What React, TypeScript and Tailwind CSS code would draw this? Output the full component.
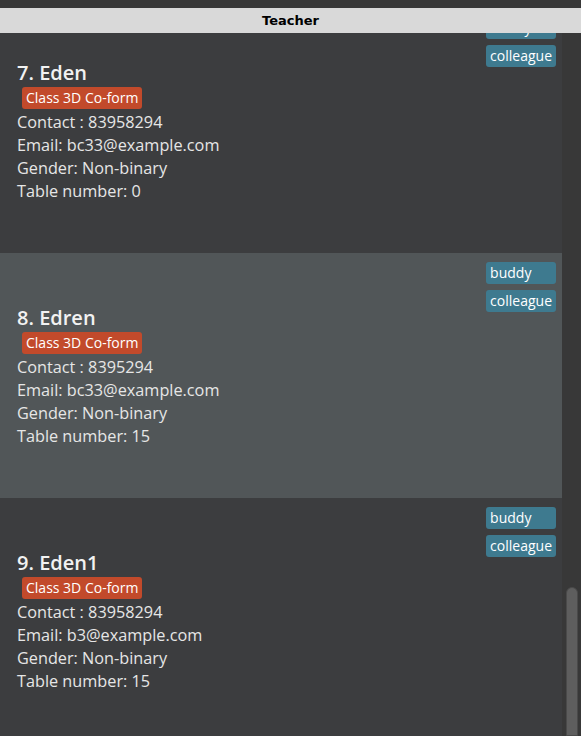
const people = [
  { id: 7, name: "Eden", contact: "83958294", email: "bc33@example.com", gender: "Non-binary", table: "0", light: false },
  { id: 8, name: "Edren", contact: "8395294", email: "bc33@example.com", gender: "Non-binary", table: "15", light: true },
  { id: 9, name: "Eden1", contact: "83958294", email: "b3@example.com", gender: "Non-binary", table: "15", light: false },
];

type Person = (typeof people)[number];

const PersonCard = ({ person }: { person: Person }) => (
  <div
    className={
      "flex h-[245px] shrink-0 pl-[17px] pr-[6px] " + (person.light ? "bg-[#515658]" : "bg-[#3c3d3f]")
    }
  >
    <div className="flex flex-1 flex-col justify-center pt-[1px] text-[16.25px] leading-[23px] text-[#e6e6e6]">
      <div className="text-[20px] font-semibold leading-[27px] text-[#f2f2f2]">
        {person.id}. {person.name}
      </div>
      <div className="mb-[2px] ml-[5px] mt-[1px] w-fit rounded-[3px] bg-[#c24a2b] px-[4px] text-[14px] leading-[22px] text-white">
        Class 3D Co-form
      </div>
      <div>Contact : {person.contact}</div>
      <div>Email: {person.email}</div>
      <div>Gender: {person.gender}</div>
      <div>Table number: {person.table}</div>
    </div>
    <div className="flex flex-col gap-[6px] pt-[9px]">
      <span className="rounded-[3px] bg-[#3e7a8f] px-[4px] text-[14px] leading-[22px] text-white">buddy</span>
      <span className="rounded-[3px] bg-[#3e7a8f] px-[4px] text-[14px] leading-[22px] text-white">colleague</span>
    </div>
  </div>
);

export default function App() {
  return (
    <div
      className="flex h-[736px] w-[581px] flex-col overflow-hidden bg-[#383838] pt-[8px]"
      style={{ fontFamily: '"Open Sans", "Noto Sans", sans-serif' }}
    >
      <div className="relative z-10 flex h-[25px] shrink-0 items-center justify-center bg-[#d9d9d9]">
        <span className="font-['DejaVu_Sans',sans-serif] text-[13px] font-bold text-black">Teacher</span>
      </div>
      <div className="flex min-h-0 flex-1">
        <div className="min-w-0 flex-1 overflow-hidden">
          <div className="mt-[-25px] flex flex-col">
            {people.map((p) => (
              <PersonCard key={p.id} person={p} />
            ))}
          </div>
        </div>
        <div className="flex w-[19px] flex-col justify-end bg-[#383838]">
          <div className="ml-[4px] h-[149px] w-[12px] rounded-t-[6px] border border-[#4a4a4a] bg-[#5e5e5e]" />
        </div>
      </div>
    </div>
  );
}
